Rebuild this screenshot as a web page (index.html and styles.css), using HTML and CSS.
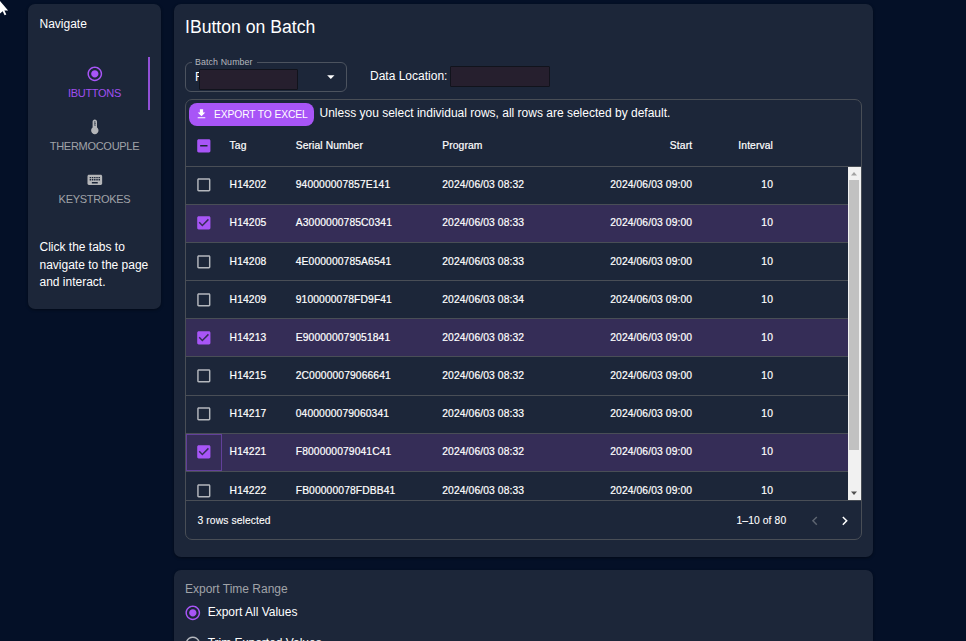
FILE: index.html
```html
<!DOCTYPE html>
<html lang="en">
<head>
<meta charset="utf-8">
<title>IButton on Batch</title>
<link rel="stylesheet" href="styles.css">
</head>
<body>
<svg class="cursor" viewBox="0 0 10 16"><path d="M0 0v12.6l2.7-2.4 1.9 4 1.7-.8-1.9-3.9h3.7z" fill="#fff"/></svg>
<svg class="defs" width="0" height="0">
  <symbol id="radio-on" viewBox="0 0 24 24"><path d="M12 7c-2.76 0-5 2.24-5 5s2.24 5 5 5 5-2.24 5-5-2.24-5-5-5zm0-5C6.48 2 2 6.48 2 12s4.480 10 10 10 10-4.480 10-10S17.520 2 12 2zm0 18c-4.420 0-8-3.580-8-8s3.580-8 8-8 8 3.580 8 8-3.580 8-8 8z"/></symbol>
  <symbol id="radio-off" viewBox="0 0 24 24"><path d="M12 2C6.480 2 2 6.480 2 12s4.480 10 10 10 10-4.480 10-10S17.520 2 12 2zm0 18c-4.420 0-8-3.580-8-8s3.580-8 8-8 8 3.580 8 8-3.580 8-8 8z"/></symbol>
  <symbol id="thermo" viewBox="0 0 24 24"><path d="M15 13V5c0-1.660-1.340-3-3-3S9 3.340 9 5v8c-1.210.910-2 2.370-2 4 0 2.760 2.240 5 5 5s5-2.240 5-5c0-1.630-.790-3.090-2-4zm-3-9c.550 0 1 .450 1 1h-1v1h1v2h-1v1h1v1.500h-1.500V5c0-.550 0-1 .500-1z"/></symbol>
  <symbol id="keyboard" viewBox="0 0 24 24"><path d="M20 5H4c-1.100 0-1.990.900-1.990 2L2 17c0 1.100.900 2 2 2h16c1.100 0 2-.900 2-2V7c0-1.100-.900-2-2-2zm-9 3h2v2h-2V8zm0 3h2v2h-2v-2zM8 8h2v2H8V8zm0 3h2v2H8v-2zm-1 2H5v-2h2v2zm0-3H5V8h2v2zm9 7H8v-2h8v2zm0-4h-2v-2h2v2zm0-3h-2V8h2v2zm3 3h-2v-2h2v2zm0-3h-2V8h2v2z"/></symbol>
  <symbol id="download" viewBox="0 0 24 24"><path d="M5 20h14v-2H5v2zM19 9h-4V3H9v6H5l7 7 7-7z"/></symbol>
  <symbol id="caret" viewBox="0 0 24 24"><path d="M7 10l5 5 5-5z"/></symbol>
  <symbol id="box" viewBox="0 0 24 24"><path d="M19 5v14H5V5h14m0-2H5c-1.100 0-2 .900-2 2v14c0 1.100.900 2 2 2h14c1.100 0 2-.900 2-2V5c0-1.100-.900-2-2-2z"/></symbol>
  <symbol id="checked" viewBox="0 0 24 24"><path d="M19 3H5c-1.110 0-2 .900-2 2v14c0 1.100.890 2 2 2h14c1.110 0 2-.900 2-2V5c0-1.100-.890-2-2-2zm-9 14l-5-5 1.410-1.410L10 14.170l7.590-7.590L19 8l-9 9z"/></symbol>
  <symbol id="partial" viewBox="0 0 24 24"><path d="M19 3H5c-1.100 0-2 .900-2 2v14c0 1.100.900 2 2 2h14c1.100 0 2-.900 2-2V5c0-1.100-.900-2-2-2zm-2 10H7v-2h10v2z"/></symbol>
  <symbol id="left" viewBox="0 0 24 24"><path d="M15.410 16.590L10.830 12l4.580-4.590L14 6l-6 6 6 6z"/></symbol>
  <symbol id="right" viewBox="0 0 24 24"><path d="M8.590 16.590L13.170 12 8.590 7.410 10 6l6 6-6 6z"/></symbol>
</svg>

<div class="page">
  <aside class="card nav">
    <div class="nav-title">Navigate</div>
    <div class="tabs">
      <div class="tab active"><svg class="icon"><use href="#radio-on"/></svg><span>IBUTTONS</span></div>
      <div class="tab"><svg class="icon"><use href="#thermo"/></svg><span>THERMOCOUPLE</span></div>
      <div class="tab"><svg class="icon"><use href="#keyboard"/></svg><span>KEYSTROKES</span></div>
    </div>
    <p class="hint">Click the tabs to navigate to the page and interact.</p>
  </aside>

  <main class="content">
    <section class="card batch">
      <h1>IButton on Batch</h1>
      <div class="controls">
        <fieldset class="select">
          <legend>Batch Number</legend>
          <div class="select-row"><span class="value">F</span><span class="redact"></span><svg class="icon caret"><use href="#caret"/></svg></div>
        </fieldset>
        <span class="location">Data Location:</span>
        <span class="redact"></span>
      </div>

      <div class="grid">
        <div class="toolbar">
          <button class="export"><svg class="dl"><use href="#download"/></svg>EXPORT TO EXCEL</button>
          <span>Unless you select individual rows, all rows are selected by default.</span>
        </div>
        <div class="row head">
          <div class="check"><svg class="icon on"><use href="#partial"/></svg></div><div>Tag</div><div>Serial Number</div><div>Program</div><div class="num">Start</div><div class="num">Interval</div>
        </div>
        <div class="body">
          <div class="rows">
            <div class="row"><div class="check"><svg class="icon"><use href="#box"/></svg></div><div>H14202</div><div>940000007857E141</div><div>2024/06/03 08:32</div><div class="num">2024/06/03 09:00</div><div class="num">10</div></div>
            <div class="row selected"><div class="check"><svg class="icon on"><use href="#checked"/></svg></div><div>H14205</div><div>A3000000785C0341</div><div>2024/06/03 08:33</div><div class="num">2024/06/03 09:00</div><div class="num">10</div></div>
            <div class="row"><div class="check"><svg class="icon"><use href="#box"/></svg></div><div>H14208</div><div>4E000000785A6541</div><div>2024/06/03 08:33</div><div class="num">2024/06/03 09:00</div><div class="num">10</div></div>
            <div class="row"><div class="check"><svg class="icon"><use href="#box"/></svg></div><div>H14209</div><div>9100000078FD9F41</div><div>2024/06/03 08:34</div><div class="num">2024/06/03 09:00</div><div class="num">10</div></div>
            <div class="row selected"><div class="check"><svg class="icon on"><use href="#checked"/></svg></div><div>H14213</div><div>E900000079051841</div><div>2024/06/03 08:32</div><div class="num">2024/06/03 09:00</div><div class="num">10</div></div>
            <div class="row"><div class="check"><svg class="icon"><use href="#box"/></svg></div><div>H14215</div><div>2C00000079066641</div><div>2024/06/03 08:32</div><div class="num">2024/06/03 09:00</div><div class="num">10</div></div>
            <div class="row"><div class="check"><svg class="icon"><use href="#box"/></svg></div><div>H14217</div><div>0400000079060341</div><div>2024/06/03 08:33</div><div class="num">2024/06/03 09:00</div><div class="num">10</div></div>
            <div class="row selected"><div class="check focus"><svg class="icon on"><use href="#checked"/></svg></div><div>H14221</div><div>F800000079041C41</div><div>2024/06/03 08:32</div><div class="num">2024/06/03 09:00</div><div class="num">10</div></div>
            <div class="row"><div class="check"><svg class="icon"><use href="#box"/></svg></div><div>H14222</div><div>FB00000078FDBB41</div><div>2024/06/03 08:33</div><div class="num">2024/06/03 09:00</div><div class="num">10</div></div>
          </div>
          <div class="scrollbar">
            <svg class="arrow up" viewBox="0 0 12 12"><path d="M3 8l3-3.500L9 8z"/></svg>
            <div class="thumb"></div>
            <svg class="arrow down" viewBox="0 0 12 12"><path d="M3 4l3 3.500L9 4z"/></svg>
          </div>
        </div>
        <div class="footer">
          <span class="count">3 rows selected</span>
          <span class="range">1–10 of 80</span>
          <svg class="icon prev"><use href="#left"/></svg>
          <svg class="icon next"><use href="#right"/></svg>
        </div>
      </div>
    </section>

    <section class="card time">
      <div class="time-title">Export Time Range</div>
      <div class="option"><svg class="icon on"><use href="#radio-on"/></svg>Export All Values</div>
      <div class="option"><svg class="icon"><use href="#radio-off"/></svg>Trim Exported Values</div>
    </section>
  </main>
</div>
</body>
</html>
```
FILE: styles.css
```css
* { box-sizing: border-box; }
html, body { height: 100%; overflow: hidden; }
body {
  margin: 0;
  background: #041027;
  color: #fff;
  font: 12px/17.64px "Liberation Sans", Arial, sans-serif;
  letter-spacing: 0;
}
.defs { position: absolute; }
.cursor { position: absolute; left: 0; top: 1px; width: 10px; height: 16px; }
.icon { width: 17.64px; height: 17.64px; fill: #b4b7bd; flex: none; display: block; }
.icon.on { fill: #a855f7; }

.page { display: flex; align-items: flex-start; gap: 12.500px; height: 100%; padding: 4px 0 0 28px; }
.card {
  background: #1c2639;
  border-radius: 7px;
  box-shadow: 0 1px 3px rgba(0, 0, 0, .4);
}

.nav { width: 133px; height: 305px; padding: 11.500px 11.500px 0; }
.tabs { margin-top: 23.500px; }
.tab {
  height: 53px;
  display: flex;
  flex-direction: column;
  align-items: center;
  justify-content: center;
  gap: 2px;
  color: #a0a3a8;
  font-size: 11px;
  letter-spacing: -0.28px;
  line-height: 16px;
}
.tab .icon { fill: #b4b5b8; }
.tab.active { color: #a04ff0; border-right: 2px solid #9150d6; padding-left: 2px; }
.tab.active .icon { fill: #a855f7; }
.hint { margin: 23.500px 0 0; }

.content { width: 699.5px; height: 100%; display: flex; flex-direction: column; gap: 12.500px; }
.batch { flex: none; height: 553px; padding: 11px 11.500px 0; }
h1 { margin: 0; font-size: 17.640px; line-height: 24px; font-weight: 400; letter-spacing: 0; }

.controls { display: flex; height: 35px; margin-top: 18px; }
.select {
  width: 161.500px;
  height: 35px;
  margin: 0;
  padding: 0 6px 0 9px;
  border: 1px solid #4c535f;
  border-radius: 6px;
}
legend {
  padding: 0 4px 0 0;
  margin-left: -3px;
  padding-left: 3px;
  height: 10px;
  line-height: 10px;
  font-size: 8.820px;
  letter-spacing: 0.11px;
  color: #b4b7bd;
}
.select-row { display: flex; align-items: center; height: 21px; margin-top: -1px; }
.value { width: 3.500px; margin-top: 2px; }
.redact { position: relative; width: 99px; height: 21px; background: #261f2e; border: 1px solid #11131c; border-radius: 1px; }
.select .redact { margin-top: 5px; }
.caret { fill: #fff; margin-left: auto; }
.location { margin: 11px 3px 0 23.500px; }
.controls > .redact { margin-top: 9px; width: 100px; height: 21px; }

.grid {
  width: 676.500px;
  height: 441px;
  margin-top: 7px;
  border: 1px solid #494e56;
  border-radius: 7px;
  overflow: hidden;
}
.toolbar { display: flex; align-items: center; gap: 6px; height: 26px; padding: 2px 0 0 2.500px; }
.export {
  display: flex;
  align-items: center;
  gap: 6px;
  height: 23px;
  width: 125px;
  padding: 0 6.500px;
  border: 0;
  border-radius: 8px;
  background: #a855f7;
  color: #fff;
  font: 10.300px "Liberation Sans", Arial, sans-serif;
  letter-spacing: -0.120px;
  white-space: nowrap;
}
.dl { width: 13px; height: 14px; fill: #fff; flex: none; }

.row {
  display: grid;
  grid-template-columns: 36.250px 66.150px 146.500px 147px 117.600px 80.850px 1fr;
  align-items: center;
  height: 38.180px;
  border-bottom: 1px solid #494e56;
  font-size: 10.300px;
  letter-spacing: 0.11px;
  -webkit-text-stroke: 0.2px;
}
.row > div { padding: 0 7.350px; }
.row > .num { text-align: right; }
.row > .check { padding: 0; height: 100%; display: flex; align-items: center; justify-content: center; }
.head { height: 40.500px; }
.selected { background: #352d57; }
.check.focus { outline: 1px solid #62409a; outline-offset: -1px; }

.body { display: flex; height: 333.500px; overflow: hidden; }
.rows { flex: 1; height: 100%; overflow: hidden; }
.scrollbar { width: 13px; background: #f1f1f1; display: flex; flex-direction: column; align-items: center; }
.arrow { width: 12px; height: 13px; flex: none; }
.up { fill: #a3a3a3; }
.down { fill: #505050; margin-top: auto; }
.thumb { width: 10px; height: 270px; background: #c1c1c1; }

.footer { display: flex; align-items: center; height: 38.500px; padding: 2px 7px 0 11.500px; border-top: 1px solid #494e56; font-size: 10.300px; letter-spacing: 0.11px; -webkit-text-stroke: 0.1px; }
.range { margin-left: auto; }
.prev { margin-left: 20px; fill: #5d6470; }
.next { margin-left: 12px; fill: #fff; }

.time { flex: 1; min-height: 0; overflow: hidden; border-radius: 7px 7px 0 0; padding: 11px 11.500px 0; }
.time-title { color: #a0a3a8; }
.option { display: flex; align-items: center; gap: 6.500px; height: 30px; margin-left: -1.500px; }
.option + .option { margin-top: 1px; }
```
